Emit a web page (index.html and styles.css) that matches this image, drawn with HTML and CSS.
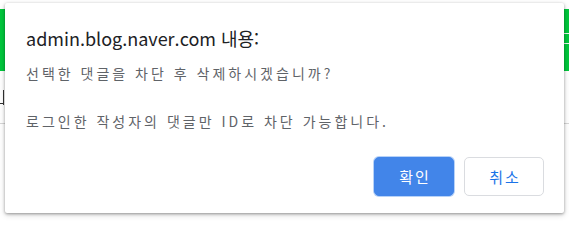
FILE: index.html
```html
<!DOCTYPE html>
<html lang="ko">
<head>
<meta charset="utf-8">
<title>admin.blog.naver.com 내용</title>
<link rel="stylesheet" href="styles.css">
</head>
<body>
<div class="page">
  <div class="band">
    <div class="band-btn"></div>
  </div>
  <div class="row">
    <div class="glyph-stub"></div>
  </div>
</div>
<div class="dialog" role="alertdialog">
  <div class="title">admin.blog.naver.com 내용:</div>
  <div class="message">
    <p>선택한 댓글을 차단 후 삭제하시겠습니까?</p>
    <p>로그인한 작성자의 댓글만 ID로 차단 가능합니다.</p>
  </div>
  <div class="actions">
    <button class="btn btn-primary">확인</button>
    <button class="btn btn-secondary">취소</button>
  </div>
</div>
</body>
</html>
```
FILE: styles.css
```css
html, body {
  margin: 0;
  padding: 0;
  background: #ffffff;
  width: 569px;
  height: 220px;
  overflow: hidden;
  font-family: "Noto Sans CJK KR", "Noto Sans", sans-serif;
}

.page {
  display: flex;
  flex-direction: column;
}

.band {
  margin-top: 9px;
  height: 62px;
  background: #00c73c;
  display: flex;
  justify-content: flex-end;
  align-items: flex-start;
  padding-top: 24px;
  box-sizing: border-box;
}

.band-btn {
  width: 30px;
  height: 9px;
  margin-right: -20px;
  border: 1px solid #e8f8ec;
  border-radius: 2px;
}

.row {
  height: 53px;
  padding-top: 19px;
  padding-left: 3px;
  box-sizing: border-box;
  border-bottom: 1px solid #d6d6d6;
}

.glyph-stub {
  position: relative;
  width: 1px;
  height: 15px;
  background: #333333;
}

.glyph-stub::before {
  content: "";
  position: absolute;
  left: -3px;
  bottom: 1px;
  width: 3px;
  height: 1px;
  background: #333333;
}

.dialog {
  position: absolute;
  left: 5px;
  top: 3px;
  width: 559px;
  height: 210px;
  box-sizing: border-box;
  background: #ffffff;
  border-radius: 2px;
  box-shadow: 0 1px 3px rgba(0, 0, 0, 0.35), 0 2px 6px rgba(0, 0, 0, 0.15);
  padding: 22px 20px 0 21px;
  display: flex;
  flex-direction: column;
}

.title {
  font-size: 18px;
  line-height: 26px;
  color: #202124;
}

.message {
  margin-top: 10px;
  color: #5f6368;
  font-size: 14px;
  letter-spacing: 3px;
  line-height: 24px;
}

.message p {
  margin: 0 0 24px 0;
}

.actions {
  margin-top: auto;
  margin-bottom: 20px;
  display: flex;
  justify-content: flex-end;
  gap: 10px;
}

.btn {
  font-family: "Noto Sans CJK KR", "Noto Sans", sans-serif;
  font-size: 15px;
  letter-spacing: 2px;
  text-indent: 2px;
  height: 39px;
  box-sizing: border-box;
  border-radius: 5px;
  cursor: pointer;
}

.btn-primary {
  width: 80px;
  background: #4285e9;
  color: #ffffff;
  border: 1px solid #4285e9;
  box-shadow: 0 0 0 1px #b7d2f8;
}

.btn-secondary {
  width: 80px;
  background: #ffffff;
  color: #1a73e8;
  border: 1px solid #dadce0;
}
```
